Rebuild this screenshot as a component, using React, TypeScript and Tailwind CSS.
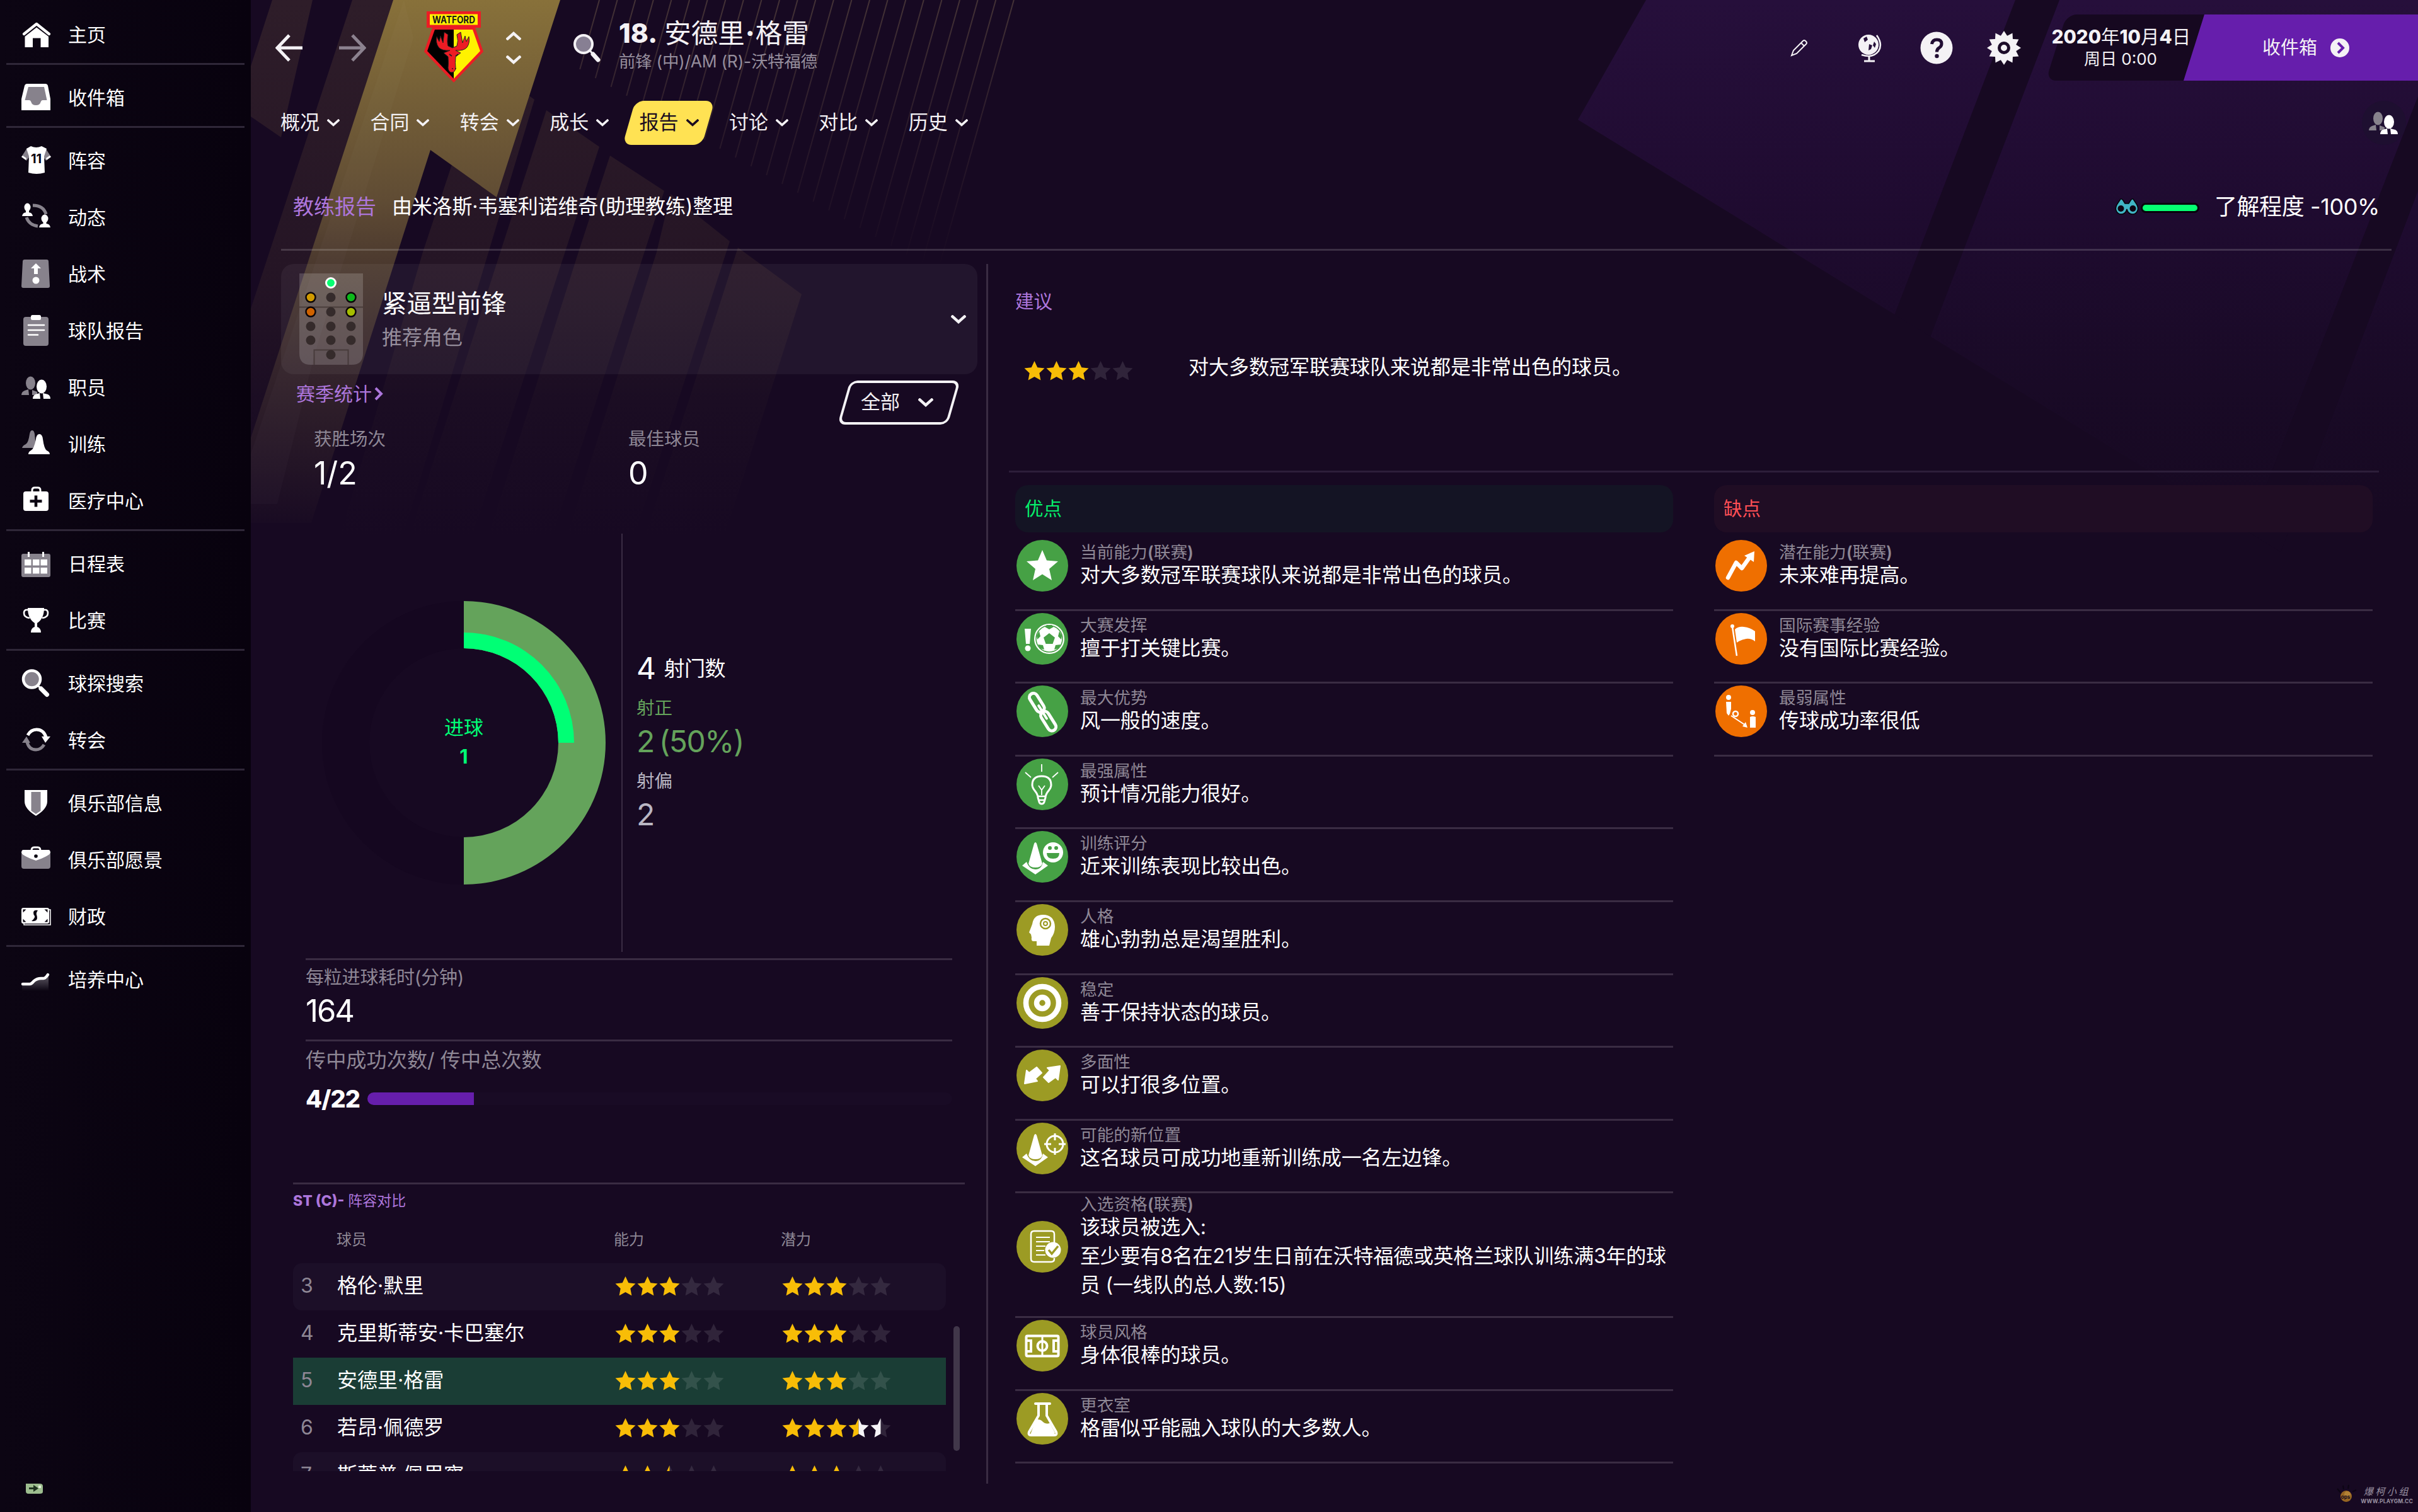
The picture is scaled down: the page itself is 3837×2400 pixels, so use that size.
import type { ReactNode } from "react";
import clsx from "clsx";

const G = "#87828c";

type IconProps = { className?: string };

/* ---------- sidebar icons (48 x 48) ---------- */

const navIcons: Record<string, ReactNode> = {
  home: (
    <>
      <path d="M4 23 24 7l20 16" fill="none" stroke="#fff" strokeWidth="4.4" strokeLinecap="round" strokeLinejoin="round" />
      <path d="M5.500 27 24 12.500 43 27V44H30.500V29.500H18V44H5.500Z" fill="#fff" />
    </>
  ),
  inbox: (
    <>
      <path d="M9 2h29q3 0 4 3l4 21v18H0V26L5 5q1-3 4-3Z" fill="#fff" />
      <path d="M11 7h25l4.500 21h-7q-2 0-3 3-1 5-7.500 5t-7.500-5q-1-3-3-3h-7Z" fill={G} />
    </>
  ),
  shirt: (
    <>
      <path d="M9 4 0 18l8 6 6-8ZM38 4l9 14-8 6-6-8Z" fill={G} />
      <path d="M0 18l7 5 1-3-6-4ZM47 18l-7 5-1-3 6-4Z" fill="#fff" />
      <path d="M15 1q8.500 4 17 0l8 4-4 12 1 26q-13 4-26 0l1-26L8 5Z" fill="#fff" />
      <text x="23.500" y="28" fontSize="20" fontWeight="700" textAnchor="middle" fill="#0a0411">11</text>
    </>
  ),
  dynamics: (
    <>
      <path d="M18 5q17 0 21 14M8 24q4 12 18 14" fill="none" stroke={G} strokeWidth="5" />
      <ellipse cx="9.500" cy="8" rx="5" ry="6.500" fill="#fff" />
      <path d="M1 22q1-6 7-6h3q6 0 7 6ZM28 40q1-6 7-6h4q6 0 7 6Z" fill="#fff" />
      <ellipse cx="37" cy="26" rx="5.500" ry="6.500" fill="#fff" />
      <path d="M7 12h5v6H7ZM34.500 30h5v6h-5Z" fill="#fff" />
    </>
  ),
  tactics: (
    <>
      <path d="M5 1h35q3 0 3 3l2 39q0 3-3 3H3q-3 0-3-3L2 4q0-3 3-3Z" fill={G} />
      <path d="M23 7l8 8h-5v9h-6v-9h-5Z" fill="#fff" />
      <circle cx="23" cy="34" r="5.500" fill="#fff" />
    </>
  ),
  report: (
    <>
      <rect x="3" y="2" width="40" height="46" rx="4" fill={G} />
      <rect x="15" y="-1" width="16" height="8" rx="2.500" fill="#fff" />
      <path d="M11 15h25M11 23h25M11 30.500h15" stroke="#fff" strokeWidth="2.600" strokeLinecap="round" />
    </>
  ),
  staff: (
    <>
      <ellipse cx="14.500" cy="17" rx="7.500" ry="10.500" fill={G} />
      <path d="M0 36q0-5 5-7l6-2 1 9ZM17 28l8 3v5h-8Z" fill={G} />
      <ellipse cx="32" cy="22.500" rx="8" ry="11" fill="#fff" />
      <path d="M18 42q0-5 4-7l7-2 1 9ZM34 33l8 2q4 2 4 7H35Z" fill="#fff" />
    </>
  ),
  training: (
    <>
      <path d="M1 30q1-4 6-6 4-2 6-16 1-6 4-6t4 6l2 22Z" fill={G} />
      <path d="M11 40q0-4 4-6 5-2 8-18 1-8 5.500-8t5.500 8q2 15 6 18 5 2 5 6Z" fill="#fff" />
    </>
  ),
  medical: (
    <>
      <path d="M17 10V7q0-4 4-4h5q4 0 4 4v3" fill="none" stroke="#fff" strokeWidth="3" />
      <rect x="3" y="9" width="40" height="31" rx="4" fill="#fff" />
      <path d="M23 15.500v18M13.500 24.500h19" stroke="#0a0411" strokeWidth="4.600" />
    </>
  ),
  calendar: (
    <>
      <rect x="0" y="8" width="46" height="37" rx="3" fill={G} />
      <path d="M11.500 5v8M34.500 5v8" stroke="#fff" strokeWidth="3" />
      <path d="M5 17h10.500v9.500H5ZM18 17h10.500v9.500H18ZM30.500 17H41v9.500H30.500ZM5 30h10.500v9.500H5ZM18 30h10.500v9.500H18ZM30.500 30H41v9.500H30.500Z" fill="#fff" />
    </>
  ),
  trophy: (
    <>
      <path d="M11 7H7q-3 1-3 5 0 7 9 8M35 7h4q3 1 3 5 0 7-9 8" fill="none" stroke="#fff" strokeWidth="2.600" />
      <path d="M10 4h26q0 17-11 24v6q6 2 6 9H15q0-7 6-9v-6Q10 21 10 4Z" fill="#fff" />
    </>
  ),
  search: (
    <>
      <circle cx="16.500" cy="17" r="13.500" fill={G} stroke="#fff" strokeWidth="4.500" />
      <path d="m31 32 9.500 9.500" stroke="#fff" strokeWidth="7" strokeLinecap="round" />
      <path d="m26 27 6 6" stroke="#fff" strokeWidth="3" />
    </>
  ),
  transfer: (
    <>
      <path d="M10 16q5-9 14-9 11 0 15 12" fill="none" stroke="#fff" strokeWidth="5" />
      <path d="M32 18h14l-8 10Z" fill="#fff" />
      <path d="M36 31q-5 8-13 8-11 0-14-12" fill="none" stroke={G} strokeWidth="5" />
      <path d="M14 28H1l7-10Z" fill={G} />
    </>
  ),
  shield: (
    <>
      <path d="M5 3h36v18q0 12-18 23Q5 33 5 21Z" fill="#fff" />
      <path d="M15.500 6h15v30l-7.500 5-7.500-5Z" fill={G} />
    </>
  ),
  briefcase: (
    <>
      <path d="M16 9q0-5 4-5h6q4 0 4 5" fill="none" stroke="#fff" strokeWidth="3" />
      <path d="M0 14h46v20q0 4-4 4H4q-4 0-4-4Z" fill={G} />
      <path d="M3 8h40q3 0 3 5-3 5-23 12Q3 18 0 13q0-5 3-5Z" fill="#fff" />
      <circle cx="23" cy="18" r="2.800" fill="#0a0411" />
    </>
  ),
  finance: (
    <>
      <path d="M43 13h3v24H4v-2" fill="none" stroke="#fff" strokeWidth="1.500" />
      <rect x="0" y="10" width="44" height="25" rx="3" fill="#fff" />
      <path d="M2.500 12.500h5l-5 5ZM41.500 12.500h-5l5 5ZM2.500 32.500h5l-5-5ZM41.500 32.500h-5l5-5Z" fill="#0a0411" />
      <path d="M26 14q-7-1-7 4 0 3 2 5 1 3-5 8 9 1 9-5 0-3-1-5-1-3 2-7Z" fill="#0a0411" />
    </>
  ),
  youth: (
    <>
      <defs>
        <linearGradient id="youthFade" x1="0" y1="0" x2="0" y2="1">
          <stop offset="0" stopColor="#8a858f" />
          <stop offset="1" stopColor="#0a0411" />
        </linearGradient>
      </defs>
      <path d="M1 32h12l8-7 10-3h5l7-6v26H1Z" fill="url(#youthFade)" opacity=".7" />
      <path d="M2 31h11q3 0 7-5 5-4 11-4h4q3 0 7-6" fill="none" stroke="#fff" strokeWidth="4.500" strokeLinecap="round" />
    </>
  ),
};

const navGroups = [
  [["home", "主页"]],
  [["inbox", "收件箱"]],
  [
    ["shirt", "阵容"],
    ["dynamics", "动态"],
    ["tactics", "战术"],
    ["report", "球队报告"],
    ["staff", "职员"],
    ["training", "训练"],
    ["medical", "医疗中心"],
  ],
  [
    ["calendar", "日程表"],
    ["trophy", "比赛"],
  ],
  [
    ["search", "球探搜索"],
    ["transfer", "转会"],
  ],
  [
    ["shield", "俱乐部信息"],
    ["briefcase", "俱乐部愿景"],
    ["finance", "财政"],
  ],
  [["youth", "培养中心"]],
];

function Sidebar() {
  return (
    <aside className="relative flex w-[398px] shrink-0 flex-col bg-gradient-to-r from-[#0c0513] to-[#08020e] pt-[10px]">
      {navGroups.map((group, i) => (
        <div key={i}>
          {i > 0 && <div className="mb-[7px] ml-[10px] h-[3px] w-[378px] bg-[#2f2738]" />}
          {group.map(([icon, label]) => (
            <div key={label} className="flex h-[90px] items-center pl-[34px]">
              <svg viewBox="0 0 48 48" className="size-12 shrink-0 overflow-visible">
                {navIcons[icon]}
              </svg>
              <span className="ml-[26px] text-[30px] leading-[30px] text-white">{label}</span>
            </div>
          ))}
        </div>
      ))}
      <svg viewBox="0 0 30 22" className="mt-auto mb-[26px] ml-[39px] h-[22px] w-[30px]">
        <path d="M2 3h22q5 0 5 4v9q0 3-5 3H6q-4 0-4-4Z" fill="#9dbd8f" />
        <path d="M7 9h7V5l8 5.500-8 5.500v-4H7Z" fill="#1f3320" />
        <rect x="22" y="6" width="4" height="4" fill="#e6f3dd" />
      </svg>
    </aside>
  );
}

/* ---------- backdrop ---------- */

function Backdrop() {
  const lines = Array.from({ length: 24 }, (_, i) => i);
  return (
    <svg viewBox="0 0 3837 2400" className="absolute inset-0 h-[2400px] w-[3837px]">
      <defs>
        <linearGradient id="gold" gradientUnits="userSpaceOnUse" x1="0" y1="0" x2="0" y2="850">
          <stop offset="0" stopColor="#88713a" />
          <stop offset=".37" stopColor="#604c34" />
          <stop offset=".5" stopColor="#4a382e" />
          <stop offset=".7" stopColor="#33232b" />
          <stop offset="1" stopColor="#170922" />
        </linearGradient>
        <linearGradient id="brown" gradientUnits="userSpaceOnUse" x1="0" y1="0" x2="0" y2="850">
          <stop offset="0" stopColor="#2e1d29" />
          <stop offset=".5" stopColor="#251525" />
          <stop offset=".75" stopColor="#1b0d23" />
          <stop offset="1" stopColor="#170922" />
        </linearGradient>
        <linearGradient id="violet" gradientUnits="userSpaceOnUse" x1="0" y1="0" x2="0" y2="820">
          <stop offset="0" stopColor="#260f3b" />
          <stop offset=".4" stopColor="#1f0b30" />
          <stop offset=".75" stopColor="#190a26" />
          <stop offset="1" stopColor="#170922" />
        </linearGradient>
        <linearGradient id="hair" gradientUnits="userSpaceOnUse" x1="0" y1="0" x2="0" y2="430">
          <stop offset="0" stopColor="#4f3d3b" />
          <stop offset=".5" stopColor="#2f1e2d" />
          <stop offset="1" stopColor="#170922" />
        </linearGradient>
        <clipPath id="violetShape">
          <path d="M2612 0H3837V1010L2504 190Z" />
        </clipPath>
      </defs>
      <rect width="3837" height="2400" fill="#170922" />
      <g clipPath="url(#violetShape)">
        <rect x="2500" width="1337" height="1010" fill="url(#violet)" />
        <path d="M3198 0h70l-345 900h-70ZM3837 153v150l-265 697h-65Z" fill="#170922" />
      </g>
      <path d="M432 0h64L446 218l-48-33V105ZM559 0h65L488 420 398 700V490Z" fill="url(#brown)" />
      <path d="M770 102l78 56L640 850H540l131-450Z" fill="url(#brown)" />
      <path d="M867 175l84 58L750 850H650L794 400Z" fill="url(#brown)" />
      <path d="M968 247l86 56L877 850H775L918 400Z" fill="url(#brown)" />
      <path d="M1064 308l94 75L1007 850H900L1042 400Z" fill="url(#brown)" />
      <path d="M1171 393l101 74L1150 850H1024Z" fill="url(#brown)" />
      <path d="M624 0H889L788 313 683 238 494 830H398V695Z" fill="url(#gold)" />
      <path d="M641 0 656 60 500 560 440 800H398V720Z" fill="#fff" opacity=".02" />
      {lines.map((i) => (
        <path
          key={i}
          d={`M${951 + i * 28.6} 0 L${951 + i * 28.6 - (110 + i * 14) * 0.28} ${110 + i * 14}`}
          stroke="url(#hair)"
          strokeWidth="2"
          opacity={0.8}
        />
      ))}
    </svg>
  );
}

/* ---------- small shared bits ---------- */

function Chevron({ className }: IconProps) {
  return (
    <svg viewBox="0 0 24 14" className={className}>
      <path d="M2.500 2.500 12 11l9.500-8.500" fill="none" stroke="currentColor" strokeWidth="4.400" strokeLinecap="square" />
    </svg>
  );
}

const STAR = "M16.500 1 21.300 11.200 32.500 12.600 24.300 20.300 26.400 31.400 16.500 26 6.600 31.400 8.700 20.300 .5 12.600 11.700 11.200Z";
const tone: Record<string, string> = { g: "#f8bd07", d: "#ffffff1c", w: "#f6f4f7" };

// Each star is a pair of halves: g = gold, w = white, d = dim
function Stars({ value }: { value: string }) {
  return (
    <div className="flex gap-[2px]">
      {value.split(" ").map((s, i) => (
        <svg key={i} viewBox="0 0 33 33" className="size-[33px]">
          {s[0] === s[1] ? (
            <path d={STAR} fill={tone[s[0]]} />
          ) : (
            <>
              <path d="M16.500 1V26L6.600 31.400 8.700 20.300 .5 12.600 11.700 11.200Z" fill={tone[s[0]]} />
              <path d="M16.500 1V26L26.400 31.400 24.300 20.300 32.500 12.600 21.300 11.200Z" fill={tone[s[1]]} />
            </>
          )}
        </svg>
      ))}
    </div>
  );
}

function Crest() {
  return (
    <svg viewBox="0 0 100 116" className="h-[116px] w-[100px]">
      <path d="M16 26H84L97 64 50 113 3 64Z" fill="#ed1c24" />
      <path d="M50 29V107L8 63 20 29Z" fill="#000" />
      <path d="M50 29V107L92 63 80 29Z" fill="#fff200" />
      <rect x="7" y="0" width="86" height="26" fill="#ed1c24" />
      <rect x="12" y="4.500" width="76" height="17" fill="#fff200" />
      <text x="50" y="18.500" fontSize="15.500" fontWeight="700" textAnchor="middle" textLength="68" lengthAdjust="spacingAndGlyphs" fill="#1a1a1a">
        WATFORD
      </text>
      <path
        d="M44 62q-13 1-18-5-5-7-3-17l4 8 2-9 4 11 2-17 6 4q-2 12 0 18l7 3 7-3q3-8 0-18l6-4 3 17 4-11 2 9 4-8q2 10-3 17-5 6-18 5l8 4-8 6q-1 10 0 18-1 7-6 7t-6-7q1-8 0-18l-7-6Z"
        fill="#ed1c24"
        stroke="#231f20"
        strokeWidth="1"
      />
      <path d="M43 68l4 3M57 68l-4 3M47 91h2M52 91h2" stroke="#231f20" strokeWidth="1.600" />
    </svg>
  );
}

function TopBar() {
  return (
    <header className="flex h-[151px] items-center text-[#f4f2f5]">
      <svg viewBox="0 0 44 46" className="ml-[39px] h-[46px] w-[44px]">
        <path d="M22 3 3 23l19 20M4 23h39" fill="none" stroke="currentColor" strokeWidth="5" />
      </svg>
      <svg viewBox="0 0 44 46" className="ml-[56px] h-[46px] w-[44px] text-[#8c828f]">
        <path d="M22 3l19 20-19 20M40 23H1" fill="none" stroke="currentColor" strokeWidth="5" />
      </svg>
      <div className="ml-[89px]">
        <Crest />
      </div>
      <div className="ml-[33px] flex flex-col gap-6">
        <Chevron className="h-[14px] w-6 rotate-180" />
        <Chevron className="h-[14px] w-6" />
      </div>
      <svg viewBox="0 0 46 46" className="ml-[82px] h-[46px] w-[46px]">
        <circle cx="17" cy="17" r="14" fill="#877f93" stroke="#f4f2f5" strokeWidth="4" />
        <path d="m27 27 4 5" stroke="#f4f2f5" strokeWidth="3" />
        <path d="m32 33 8 9" stroke="#f4f2f5" strokeWidth="7" strokeLinecap="round" />
      </svg>
      <div className="ml-[27px] leading-[42px]">
        <h1 className="-mt-[2px] mb-[2px] text-[42.500px]">
          <span className="mr-[11px] font-extrabold">18.</span>安德里<b className="mx-px font-extrabold">·</b>格雷
        </h1>
        <p className="text-[26.500px] tracking-[-0.300px] text-[#958d9c]">前锋 (中)/AM (R)-沃特福德</p>
      </div>

      <div className="ml-auto flex h-full items-center">
        <svg viewBox="0 0 28 28" className="size-7">
          <path d="M2 26 5 18 20 3q2-2 4 0l1 1q2 2 0 4L10 23ZM17 6l5 5" fill="none" stroke="currentColor" strokeWidth="2" />
        </svg>
        <svg viewBox="0 0 40 46" className="ml-[79px] h-[46px] w-[40px]">
          <circle cx="17" cy="18" r="16" fill="currentColor" />
          <path d="M30 3q10 14 3 25-9 12-27 6" fill="none" stroke="currentColor" strokeWidth="2.600" />
          <path d="M18 36v7M10 44h17" stroke="currentColor" strokeWidth="3" />
          <path d="M9 8l5-3 2 5-5 4ZM18 17l5 2-2 6-4 2ZM26 13l3 4-2 6-3-4Z" fill="#26103a" />
        </svg>
        <svg viewBox="0 0 52 52" className="ml-[59px] size-[52px]">
          <circle cx="26" cy="26" r="25.500" fill="currentColor" />
          <path d="M18.500 20q1-7 8-7 7.500 0 7.500 6.500 0 4-4 6.500-3.500 2-3.500 6.500" fill="none" stroke="#210d33" strokeWidth="5" />
          <circle cx="26.500" cy="39" r="3.200" fill="#210d33" />
        </svg>
        <svg viewBox="0 0 54 54" className="ml-[54px] size-[54px]">
          {Array.from({ length: 12 }, (_, i) => (
            <path key={i} d="M20.500 10 27 0l6.500 10Z" fill="currentColor" transform={`rotate(${i * 30} 27 27)`} />
          ))}
          <circle cx="27" cy="27" r="19.500" fill="currentColor" />
          <circle cx="27" cy="27" r="7.500" fill="currentColor" stroke="#1c0c29" strokeWidth="5" />
        </svg>
        <div className="relative ml-[42px] flex h-[105px] w-[232px] flex-col items-center justify-center">
          <div className="absolute inset-y-0 -right-5 left-[14px] -skew-x-[17.500deg] rounded-l-2xl bg-[#160820]" />
          <span className="relative ml-[2px] text-[29.500px] leading-[35px] whitespace-nowrap">
            <b className="font-extrabold">2020</b>年<b className="font-extrabold">10</b>月<b className="font-extrabold">4</b>日
          </span>
          <span className="relative text-[26px] leading-[35px]">周日 0:00</span>
        </div>
        <div className="relative -ml-[16px] flex h-[105px] w-[372px] items-center bg-[#661eac] pl-[125px] [clip-path:polygon(33px_0,100%_0,100%_100%,0_100%)]">
          <span className="text-[29px] leading-[30px]">收件箱</span>
          <svg viewBox="0 0 30 30" className="ml-[21px] size-[30px]">
            <circle cx="15" cy="15" r="15" fill="currentColor" />
            <path d="m12 7 8 8-8 8" fill="none" stroke="#661eac" strokeWidth="4" />
          </svg>
        </div>
      </div>
    </header>
  );
}

const tabs = ["概况", "合同", "转会", "成长", "报告", "讨论", "对比", "历史"];

function Tabs() {
  return (
    <nav className="mt-[9px] flex h-[70px] items-center pl-[47px]">
      {tabs.map((tab) => {
        const active = tab === "报告";
        return (
          <div key={tab} className={clsx("relative flex h-full w-[142.400px] items-center", active ? "text-[#1a0c20]" : "text-[#f4f2f5]")}>
            {active && <div className="absolute inset-y-0 -left-[17px] w-[126px] -skew-x-[16deg] rounded-[14px] bg-[#ffe253]" />}
            <span className="relative -mt-1 text-[31px] leading-[31px]">{tab}</span>
            <Chevron className="relative ml-[12px] h-[12px] w-[20px]" />
          </div>
        );
      })}
      <div className="mr-[19px] ml-auto flex size-[70px] items-center justify-center rounded-full bg-[#1e0f30]">
        <svg viewBox="0 0 48 48" className="size-12">
          {navIcons.staff}
        </svg>
      </div>
    </nav>
  );
}

function ReportHeader() {
  return (
    <div className="flex h-[165px] items-center pt-[31px] text-white">
      <span className="ml-[67px] text-[33px] leading-[33px] text-[#ad76dc]">教练报告</span>
      <span className="ml-[25px] text-[32px] leading-[32px] tracking-[-0.200px]">由米洛斯·韦塞利诺维奇(助理教练)整理</span>
      <svg viewBox="0 0 38 28" className="ml-auto h-[28px] w-[38px]">
        <path d="M5 8 9 2q2-1 4 2l3 5h6l3-5q2-3 4-2l4 6q5 7 3 12-2 6-8 6-7 0-9-8-2 8-9 8-6 0-8-6-2-5 3-12Z" fill="#40b5c5" stroke="#050208" strokeWidth="1.500" />
        <circle cx="9.500" cy="17" r="5" fill="#0c0613" />
        <circle cx="28.500" cy="17" r="5" fill="#0c0613" />
      </svg>
      <div className="mt-[4px] ml-[3px] h-[16px] w-[93px] rounded-full border-3 border-[#08030d] bg-[#06ff72]" />
      <span className="mr-[61px] ml-[24px] text-[36px] leading-[36px] tracking-[-0.400px]">了解程度 -100%</span>
    </div>
  );
}

/* ---------- left column ---------- */

const pitch: [number, number, string?][] = [
  [18, 38, "#d09a00"], [50, 38], [82, 38, "#0db81b"],
  [18, 61, "#cf6200"], [50, 61], [82, 61, "#a5bd00"],
  [18, 84], [50, 84], [82, 84],
  [18, 106], [50, 106], [82, 106],
  [50, 129],
];

function RoleCard() {
  return (
    <div className="flex h-[175px] w-[1105px] items-center rounded-[20px] bg-[#ffffff0d]">
      <svg viewBox="0 0 101 145" className="ml-[29px] h-[145px] w-[101px]">
        <path d="M0 0H101V127q0 18-18 18H18Q0 145 0 127Z" fill="#fff" opacity=".17" />
        <path d="M0 53.500H101M23.500 145V121.500H77.500V145" fill="none" stroke="#3d302f" strokeWidth="2" opacity=".7" />
        {pitch.map(([x, y, fill], i) => (
          <circle key={i} cx={x} cy={y} r="7.500" fill={fill ?? "#352b2b"} stroke={fill ? "#0b0508" : "none"} strokeWidth="2.500" />
        ))}
        <circle cx="50" cy="15" r="7.500" fill="#06ff72" stroke="#fff" strokeWidth="3" />
      </svg>
      <div className="ml-[30px] flex flex-col gap-[18px]">
        <span className="text-[39.500px] leading-[40px] text-white">紧逼型前锋</span>
        <span className="text-[32px] leading-[32px] text-[#958d9b]">推荐角色</span>
      </div>
      <Chevron className="mr-[18px] ml-auto h-[14px] w-6 text-[#f4f2f5]" />
    </div>
  );
}

function ShotChart() {
  return (
    <div className="mt-[72px] flex h-[664px]">
      <div className="relative flex w-[540px] items-center pl-[65px]">
        <svg viewBox="-225 -225 450 450" className="size-[450px]">
          <path d="M0-225A225 225 0 0 0 0 225V150A150 150 0 0 1 0-150Z" fill="#150720" />
          <path d="M0-225A225 225 0 0 1 0 225V150A150 150 0 0 0 0-150Z" fill="#64a35b" />
          <path d="M0-175A175 175 0 0 1 175 0H150A150 150 0 0 0 0-150Z" fill="#00ff75" />
        </svg>
        <div className="absolute inset-y-0 left-[190px] flex w-[200px] flex-col items-center justify-center pb-[2px] text-[31px] leading-[46px] text-[#00ff75]">
          <span>进球</span>
          <b className="font-bold">1</b>
        </div>
      </div>
      <div className="w-[2px] bg-[#3a2c43]" />
      <div className="pt-[189px] pl-[22px] text-[48px] leading-[50px] tracking-[-0.500px]">
        <div className="flex items-center text-white">
          4<span className="ml-[13px] text-[33px]">射门数</span>
        </div>
        <div className="mt-[19px] text-[28.500px] leading-[37px] tracking-normal text-[#64a35b]">射正</div>
        <div className="mt-[10px] tracking-[-1.500px] text-[#64a35b]">
          2<span className="ml-2">(50%)</span>
        </div>
        <div className="mt-[19px] text-[28.500px] leading-[37px] tracking-normal text-[#b9b6c3]">射偏</div>
        <div className="mt-[10px] text-[#b9b6c3]">2</div>
      </div>
    </div>
  );
}

const squad = [
  { n: 3, name: "格伦·默里", ability: "gg gg gg dd dd", potential: "gg gg gg dd dd" },
  { n: 4, name: "克里斯蒂安·卡巴塞尔", ability: "gg gg gg dd dd", potential: "gg gg gg dd dd" },
  { n: 5, name: "安德里·格雷", ability: "gg gg gg dd dd", potential: "gg gg gg dd dd" },
  { n: 6, name: "若昂·佩德罗", ability: "gg gg gg dd dd", potential: "gg gg gg gw wd" },
  { n: 7, name: "斯蒂普·佩里察", ability: "gg gg gd dd dd", potential: "gg gg gg dd dd" },
];

function SquadTable() {
  return (
    <div className="mt-[113px] ml-[19px] w-[1066px] border-t-3 border-[#3a2c43]">
      <div className="mt-[14px] text-[23px] leading-[24px] text-[#ad76dc]">
        <b className="mr-[6px] font-extrabold">ST (C)-</b>阵容对比
      </div>
      <div className="mt-[38px] flex text-[24px] leading-[24px] text-[#8e8795]">
        <span className="w-[440px] pl-[69px]">球员</span>
        <span className="w-[265px] pl-[69px]">能力</span>
        <span className="pl-[69px]">潜力</span>
      </div>
      <div className="mt-[25px] flex">
        <div className="h-[330px] w-[1036px] overflow-hidden">
          {squad.map((p) => (
            <div
              key={p.n}
              className={clsx(
                "flex h-[75px] items-center pb-[3px]",
                p.n === 5 ? "bg-[#1a3d35]" : "rounded-[14px]",
                (p.n === 3 || p.n === 7) && "bg-[#1c0f28]",
              )}
            >
              <span className="w-[70px] pl-[12px] text-[32px] leading-[32px] text-[#8e8795]">{p.n}</span>
              <span className="w-[441px] text-[32px] leading-[36px] text-white">{p.name}</span>
              <div className="w-[265px]">
                <Stars value={p.ability} />
              </div>
              <Stars value={p.potential} />
            </div>
          ))}
        </div>
        <div className="mt-[100px] ml-[12px] h-[198px] w-[10px] rounded-full bg-[#41374a]" />
      </div>
    </div>
  );
}

function LeftColumn() {
  return (
    <section className="ml-[48px] w-[1119px] shrink-0">
      <RoleCard />
      <div className="flex h-[80px] justify-between">
        <div className="mt-[16px] ml-[24px] flex h-[30px] items-center text-[30px] leading-[30px] text-[#ad76dc]">
          赛季统计
          <svg viewBox="0 0 14 22" className="ml-[4px] h-[22px] w-[14px]">
            <path d="m2 2 9 9-9 9" fill="none" stroke="currentColor" strokeWidth="4" />
          </svg>
        </div>
        <div className="relative mt-[10px] mr-[44px] flex h-[70px] w-[189px] items-center text-[#f4f2f5]">
          <div className="absolute inset-y-0 right-[7px] left-[7px] -skew-x-[16deg] rounded-[12px] border-4 border-[#f4f2f5]" />
          <span className="-mt-[4px] ml-[34px] text-[31px] leading-[31px]">全部</span>
          <Chevron className="ml-[29px] h-[14px] w-6" />
        </div>
      </div>
      <div className="mt-[8px] flex pl-[52px]">
        <div className="w-[499px]">
          <div className="text-[28.500px] leading-[30px] text-[#8e8795]">获胜场次</div>
          <div className="mt-[14px] text-[50px] leading-[50px] text-white">1/2</div>
        </div>
        <div>
          <div className="text-[28.500px] leading-[30px] text-[#8e8795]">最佳球员</div>
          <div className="mt-[14px] text-[50px] leading-[50px] text-white">0</div>
        </div>
      </div>
      <div className="-mt-px">
        <ShotChart />
      </div>
      <div className="mt-[10px] ml-[39px] w-[1026px] border-t-3 border-[#3a2c43] pt-[13px]">
        <div className="text-[29px] leading-[30px] tracking-[-0.200px] text-[#8e8795]">每粒进球耗时(分钟)</div>
        <div className="mt-[13px] text-[49px] leading-[50px] tracking-[-2px] text-white">164</div>
      </div>
      <div className="mt-[20px] ml-[39px] w-[1026px] border-t-3 border-[#3a2c43] pt-[14px]">
        <div className="text-[32.200px] leading-[32px] text-[#8e8795]">传中成功次数/ 传中总次数</div>
        <div className="mt-[25px] flex h-[40px] items-center">
          <b className="w-[98px] text-[38px] leading-[40px] font-extrabold tracking-tight text-white">4/22</b>
          <div className="h-[20px] flex-1 overflow-hidden rounded-full bg-[#190b25]">
            <div className="h-full bg-[#661eac]" style={{ width: `${(4 / 22) * 100}%` }} />
          </div>
        </div>
      </div>
      <SquadTable />
    </section>
  );
}

/* ---------- right column ---------- */

const cone = (
  <>
    <path d="M28 20q2-4 4 0l9 32q-2 6-11 6t-11-6Z" fill="#fff" />
    <path d="M16 49 9 55l21 14 20-14-8-6q-2 12-12 12T16 49Z" fill="#fff" />
  </>
);

const traitIcons: Record<string, ReactNode> = {
  star: <path d="m41 16 7 16.500 18 1.500-14 12 4 18-15-9.500L26 64l4-18-14-12 18-1.500Z" fill="#fff" />,
  bigMatch: (
    <>
      <path d="M13 25h10l-2 24h-6Z" fill="#fff" />
      <circle cx="18" cy="56" r="4.500" fill="#fff" />
      <circle cx="52" cy="41" r="24" fill="#fff" />
      <circle cx="52" cy="41" r="21" fill="none" stroke="currentColor" strokeWidth="1.500" />
      <path d="m52 32 9 7-3.500 10h-11L43 39ZM45 22l7 4 7-4-3-3h-8ZM68 29l-2 8 5 5 1-6ZM36 29l2 8-5 5-1-6ZM60 58l2-7 8-1-3 6ZM44 58l-2-7-8-1 3 6Z" fill="currentColor" />
    </>
  ),
  chain: (
    <g fill="none" stroke="#fff" strokeWidth="5" transform="rotate(-32 42 42)">
      <rect x="35" y="8" width="13" height="33" rx="6.500" />
      <rect x="35" y="42" width="13" height="34" rx="6.500" />
      <path d="M41.500 30v24" strokeWidth="4" strokeLinecap="round" />
    </g>
  ),
  bulb: (
    <g fill="none" stroke="#fff" strokeWidth="3">
      <path d="M34 62q0-5-5-11-4-5-4-9 0-14 15-14t15 14q0 4-4 9-5 6-5 11l-2 7q-1 3-4 3t-4-3Z" />
      <path d="M34 60h12M36 66h8" strokeWidth="2.500" />
      <path d="m35 43 5 7 5-7M40 50v8M40 9v12M14 22l9 8M66 22l-9 8" strokeWidth="1.800" />
    </g>
  ),
  coneSmile: (
    <>
      {cone}
      <circle cx="58" cy="34" r="16" fill="#fff" />
      <circle cx="53" cy="27" r="3" fill="currentColor" />
      <circle cx="63" cy="27" r="3" fill="currentColor" />
      <path d="M48 35h20q0 9-10 9t-10-9Z" fill="currentColor" />
    </>
  ),
  head: (
    <>
      <path d="M42 17q18 0 19 19 0 10-6 18l-3 12H32v-7h-6q-3-1-2-6l-1-5-3-3 5-13q2-15 17-15Z" fill="#fff" />
      <circle cx="46" cy="31" r="8" fill="none" stroke="currentColor" strokeWidth="2.500" />
      <circle cx="46" cy="31" r="3" fill="none" stroke="currentColor" strokeWidth="2" />
    </>
  ),
  target: (
    <g fill="none" stroke="#fff" strokeWidth="8.500">
      <circle cx="41" cy="41" r="26" />
      <circle cx="41" cy="41" r="9" />
    </g>
  ),
  arrows: (
    <path d="M13 54 16 33l4 4 12-9 8 9-10 9 3 4ZM69 26l-3 22-4-4-11 8-8-8 10-11-4-4Z" fill="#fff" stroke="#fff" strokeWidth="2" strokeLinejoin="round" />
  ),
  coneAim: (
    <>
      {cone}
      <g fill="none" stroke="#fff" strokeWidth="3">
        <circle cx="61" cy="34" r="13" />
        <path d="M61 17v11M61 40v11M44 34h11M67 34h11" />
      </g>
    </>
  ),
  document: (
    <>
      <path d="M60 34V21q0-5-5-5H28q-5 0-5 5v39q0 5 5 5h27q5 0 5-5v-1" fill="none" stroke="#fff" strokeWidth="2.500" />
      <path d="M31 26h22M31 33h22M31 40h15M31 47h13M31 54h15" stroke="#fff" strokeWidth="2" />
      <circle cx="58" cy="46" r="12.500" fill="#fff" />
      <path d="m51 46 5 6 10-12" fill="none" stroke="currentColor" strokeWidth="3.500" />
    </>
  ),
  pitch: (
    <g fill="none" stroke="#fff" strokeWidth="4">
      <rect x="15.500" y="25.500" width="51" height="32" rx="2" />
      <path d="M41 25v33" strokeWidth="3" />
      <circle cx="41" cy="41.500" r="7.500" />
      <path d="M15 33h8v17h-8M67 33h-8v17h8" />
    </g>
  ),
  flask: (
    <>
      <path d="M30 17h23M35 18v18L20 62q-2 5 3 5h37q5 0 3-5L48 36V18" fill="none" stroke="#fff" strokeWidth="4" strokeLinecap="round" />
      <path d="m28 50 5-8q6 0 9 4 4 4 11 2l8 15-1 3H22Z" fill="#fff" />
    </>
  ),
  trend: (
    <>
      <path d="M20 60 33 36l9 9 15-21" fill="none" stroke="#fff" strokeWidth="6.500" strokeLinecap="round" strokeLinejoin="round" />
      <path d="m62 18-1 17-15-10Z" fill="#fff" />
    </>
  ),
  flag: (
    <>
      <circle cx="27" cy="21" r="3" fill="#fff" />
      <path d="m27 22 7 46" stroke="#fff" strokeWidth="2.500" />
      <path d="M31 26q6-5 14-4 10 1 18 7v16q-7-5-14-4-8 1-15 6Z" fill="#fff" />
    </>
  ),
  passing: (
    <>
      <circle cx="21" cy="19" r="4" fill="#fff" />
      <path d="M17 26h8v11l-2 8-2 3-3-4Z" fill="#fff" />
      <circle cx="32" cy="45" r="4" fill="none" stroke="#fff" strokeWidth="2.500" />
      <path d="m25 48 24 16" stroke="#fff" strokeWidth="2" />
      <path d="m51 67-8-2 5-7Z" fill="#fff" />
      <circle cx="59" cy="43" r="4" fill="#fff" />
      <path d="M55 50q4-2 9 0v17h-9Z" fill="#fff" />
    </>
  ),
};

type Trait = { icon: string; color: string; label: ReactNode; lines: string[] };

const GREEN = "#46a145";
const OLIVE = "#9c9b24";
const ORANGE = "#ef6f00";

const league = (
  <>
    <span className="font-semibold">(</span>联赛<span className="font-semibold">)</span>
  </>
);

const pros: Trait[] = [
  { icon: "star", color: GREEN, label: <>当前能力{league}</>, lines: ["对大多数冠军联赛球队来说都是非常出色的球员。"] },
  { icon: "bigMatch", color: GREEN, label: "大赛发挥", lines: ["擅于打关键比赛。"] },
  { icon: "chain", color: GREEN, label: "最大优势", lines: ["风一般的速度。"] },
  { icon: "bulb", color: GREEN, label: "最强属性", lines: ["预计情况能力很好。"] },
  { icon: "coneSmile", color: GREEN, label: "训练评分", lines: ["近来训练表现比较出色。"] },
  { icon: "head", color: OLIVE, label: "人格", lines: ["雄心勃勃总是渴望胜利。"] },
  { icon: "target", color: OLIVE, label: "稳定", lines: ["善于保持状态的球员。"] },
  { icon: "arrows", color: OLIVE, label: "多面性", lines: ["可以打很多位置。"] },
  { icon: "coneAim", color: OLIVE, label: "可能的新位置", lines: ["这名球员可成功地重新训练成一名左边锋。"] },
  {
    icon: "document",
    color: OLIVE,
    label: <>入选资格{league}</>,
    lines: ["该球员被选入:", "至少要有8名在21岁生日前在沃特福德或英格兰球队训练满3年的球", "员 (一线队的总人数:15)"],
  },
  { icon: "pitch", color: OLIVE, label: "球员风格", lines: ["身体很棒的球员。"] },
  { icon: "flask", color: OLIVE, label: "更衣室", lines: ["格雷似乎能融入球队的大多数人。"] },
];

const cons: Trait[] = [
  { icon: "trend", color: ORANGE, label: <>潜在能力{league}</>, lines: ["未来难再提高。"] },
  { icon: "flag", color: ORANGE, label: "国际赛事经验", lines: ["没有国际比赛经验。"] },
  { icon: "passing", color: ORANGE, label: "最弱属性", lines: ["传球成功率很低"] },
];

function TraitRow({ trait }: { trait: Trait }) {
  const tall = trait.lines.length > 1;
  return (
    <li className={clsx("flex border-b-3 border-[#3a2c43]", tall ? "h-[197.600px]" : "h-[115.600px]")}>
      <svg viewBox="0 0 82 82" className={clsx("ml-[2px] size-[82px] shrink-0", tall ? "mt-[44px]" : "mt-[3px]")} style={{ color: trait.color }}>
        <circle cx="41" cy="41" r="41" fill="currentColor" />
        {traitIcons[trait.icon]}
      </svg>
      <div className={clsx("ml-[19px] whitespace-nowrap", tall ? "pt-[4px]" : "pt-[7px]")}>
        <div className={clsx("text-[26.700px] text-[#8e8795]", tall ? "leading-[27px]" : "leading-[30px]")}>{trait.label}</div>
        {trait.lines.map((line) => (
          <div key={line} className={clsx("text-[32px] tracking-[-0.100px] text-white", tall ? "leading-[46px] tracking-[-0.200px]" : "leading-[43px]")}>
            {line}
          </div>
        ))}
      </div>
    </li>
  );
}

function RightColumn() {
  return (
    <section className="flex-1">
      <h2 className="mt-[44px] ml-[43px] text-[29.500px] leading-[30px] text-[#ad76dc]">建议</h2>
      <div className="mt-[70px] ml-[57px] flex h-[40px] items-center">
        <div className="w-[261px] pt-[10px]">
          <Stars value="gg gg gg dd dd" />
        </div>
        <p className="text-[32px] leading-[40px] text-white">对大多数冠军联赛球队来说都是非常出色的球员。</p>
      </div>
      <div className="mt-[144px] ml-[33px] h-[3px] w-[2174px] bg-[#2d1e3a]" />
      <div className="mt-[20px] ml-[43px] flex gap-[65px]">
        <div className="w-[1044px]">
          <h3 className="h-[75px] rounded-[20px] bg-[#141424] pl-[15px] text-[29.500px] leading-[75px] text-[#06ee6b]">优点</h3>
          <ul className="mt-[9px]">
            {pros.map((t) => (
              <TraitRow key={t.icon} trait={t} />
            ))}
          </ul>
        </div>
        <div className="w-[1045px]">
          <h3 className="h-[75px] rounded-[20px] bg-[#200d24] pl-[15px] text-[29.500px] leading-[75px] text-[#ff4f55]">缺点</h3>
          <ul className="mt-[9px]">
            {cons.map((t) => (
              <TraitRow key={t.icon} trait={t} />
            ))}
          </ul>
        </div>
      </div>
    </section>
  );
}

function Watermark() {
  return (
    <div className="absolute right-[8px] bottom-[9px] flex items-center opacity-80">
      <svg viewBox="0 0 36 36" className="mr-[5px] size-9">
        <path d="M4 8l5 6M13 3l1 6M22 2l-1 6M28 13l6-3" stroke="#0a0510" strokeWidth="2" />
        <circle cx="18" cy="20" r="9" fill="#b87d22" />
        <circle cx="20" cy="17" r="5" fill="#d9a03a" />
        <text x="17" y="24" fontSize="8" fontWeight="700" textAnchor="middle" fill="#140a1c">ops</text>
      </svg>
      <div className="text-center text-[#b9b2c0]">
        <div className="text-[15px] leading-[20px] tracking-[3.500px] italic">爆柯小组</div>
        <div className="text-[8.500px] leading-[10px] font-bold tracking-[0.200px]">WWW.PLAYGM.CC</div>
      </div>
    </div>
  );
}

export default function App() {
  return (
    <div
      lang="zh-CN"
      className="relative h-[2400px] w-[3837px] overflow-hidden bg-[#170922] font-['Inter','Noto_Sans_CJK_SC',sans-serif]"
    >
      <Backdrop />
      <div className="relative flex h-full">
        <Sidebar />
        <main className="flex flex-1 flex-col">
          <TopBar />
          <Tabs />
          <ReportHeader />
          <div className="ml-[48px] h-[3px] w-[3349px] bg-[#ffffff28]" />
          <div className="mt-[21px] flex flex-1">
            <LeftColumn />
            <div className="h-[1936px] w-[3px] bg-[#3a2c43]" />
            <RightColumn />
          </div>
        </main>
      </div>
      <Watermark />
    </div>
  );
}
